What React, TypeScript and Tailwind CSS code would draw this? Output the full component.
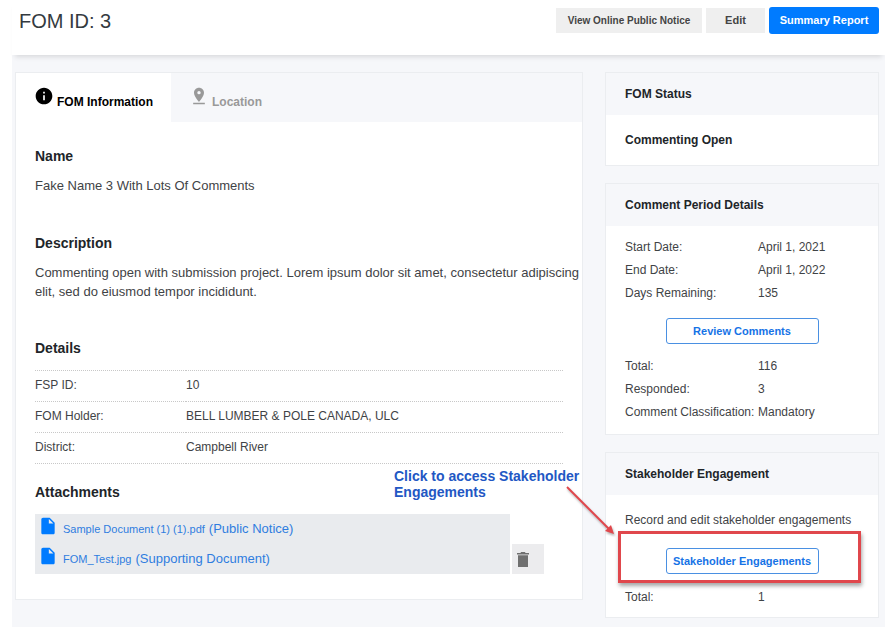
import type { ReactNode } from "react";
import { MdInfo, MdInsertDriveFile, MdPinDrop } from "react-icons/md";

const details = [
  ["FSP ID:", "10"],
  ["FOM Holder:", "BELL LUMBER & POLE CANADA, ULC"],
  ["District:", "Campbell River"],
];

function Heading({ children }: { children: ReactNode }) {
  return <h2 className="text-[14px] leading-5 font-bold text-[#212529]">{children}</h2>;
}

function Card({ title, children }: { title: string; children: ReactNode }) {
  return (
    <section className="border border-[#ebedf0] bg-white">
      <h2 className="bg-[#f6f7fa] px-[19px] py-3 text-[12px] leading-[18px] font-bold text-[#212529]">{title}</h2>
      {children}
    </section>
  );
}

function Facts({ rows }: { rows: string[][] }) {
  return (
    <dl className="grid grid-cols-[133px_1fr] leading-[23px]">
      {rows.map(([label, value]) => (
        <div key={label} className="contents">
          <dt className="whitespace-nowrap">{label}</dt>
          <dd>{value}</dd>
        </div>
      ))}
    </dl>
  );
}

function OutlineButton({ children }: { children: ReactNode }) {
  return (
    <button
      type="button"
      className="h-[26px] w-[153px] rounded-[3px] border border-[#4a90e2] bg-white text-[11px] font-bold text-[#1673e6]"
    >
      {children}
    </button>
  );
}

function Attachment({ name, kind }: { name: string; kind: string }) {
  return (
    <a href="#attachment" className="flex h-[30px] w-[475px] items-center bg-[#e9ebee] pl-[3px] text-[#2f7de0]">
      <MdInsertDriveFile className="mb-1.5 size-5 shrink-0 text-[#007bff]" />
      <span className="ml-[5px] text-[11px]">{name}</span>
      <span className="ml-1 text-[13px]">{kind}</span>
    </a>
  );
}

export default function App() {
  return (
    <div className="flex min-h-screen flex-col bg-white pl-3 font-['Liberation_Sans',Arial,sans-serif] text-[12px] text-[#3f4346]">
      <header className="z-10 flex h-[55px] items-start justify-between bg-white pt-[7px] pr-1.5 pl-[7px] shadow-[0_5px_5px_-3px_rgba(0,0,0,0.12)]">
        <h1 className="text-[20px] leading-7 text-[#343a40]">FOM ID: 3</h1>
        <div className="flex items-center gap-1 font-bold">
          <button type="button" className="h-[25px] w-[146px] bg-[#efefef] text-[10px] text-[#444444]">
            View Online Public Notice
          </button>
          <button type="button" className="h-[25px] w-[59px] bg-[#efefef] text-[11px] text-[#444444]">
            Edit
          </button>
          <button type="button" className="h-[27px] w-[110px] rounded-[3px] bg-[#007bff] text-[11px] text-white">
            Summary Report
          </button>
        </div>
      </header>

      <main className="flex flex-1 items-start gap-[22px] bg-[#f6f7fa] pt-[17px] pr-1.5 pb-2 pl-[3px]">
        <section className="relative min-w-0 flex-1 border border-[#ebedf0] bg-white">
          <div role="tablist" className="flex h-[49px] bg-[#f6f7fa] font-bold">
            <button
              type="button"
              role="tab"
              aria-selected="true"
              className="flex w-[155px] items-center gap-[3px] bg-white pl-[18px] text-black"
            >
              <MdInfo className="mb-1 size-5" />
              <span className="pt-2">FOM Information</span>
            </button>
            <button
              type="button"
              role="tab"
              aria-selected="false"
              className="flex items-center gap-[3px] pl-[18px] text-[#999999]"
            >
              <MdPinDrop className="mb-1 size-5" />
              <span className="pt-2">Location</span>
            </button>
          </div>

          <div className="px-[19px] pt-6 pb-[25px]">
            <Heading>Name</Heading>
            <p className="mt-[10px] text-[13px] leading-[19px]">Fake Name 3 With Lots Of Comments</p>

            <div className="mt-[38px]">
              <Heading>Description</Heading>
              <p className="mt-[10px] -mr-[19px] text-[13px] leading-[19px]">
                Commenting open with submission project. Lorem ipsum dolor sit amet, consectetur adipiscing elit, sed do
                eiusmod tempor incididunt.
              </p>
            </div>

            <div className="mt-[37px]">
              <Heading>Details</Heading>
              <table className="mt-3 w-full border-collapse text-left">
                <tbody>
                  {details.map(([label, value]) => (
                    <tr key={label} className="h-[31px] border-y border-dotted border-[#c8c8c8]">
                      <th className="w-[151px] pb-0.5 font-normal">{label}</th>
                      <td className="pb-0.5">{value}</td>
                    </tr>
                  ))}
                </tbody>
              </table>
            </div>

            <div className="mt-[18px]">
              <Heading>Attachments</Heading>
              <div className="mt-3">
                <Attachment name="Sample Document (1) (1).pdf" kind="(Public Notice)" />
                <div className="flex gap-0.5">
                  <Attachment name="FOM_Test.jpg" kind="(Supporting Document)" />
                  <button
                    type="button"
                    aria-label="Delete attachment"
                    className="flex h-[30px] w-8 items-center bg-[#ececee] pl-[5px] text-[#707070]"
                  >
                    <svg className="h-[15px] w-3" viewBox="0 0 12 15" fill="currentColor" aria-hidden="true">
                      <path d="M0 1H3.5L4 0H8L8.500 1H12V2.500H0ZM1 3.200H11V15H1Z" />
                    </svg>
                  </button>
                </div>
              </div>
            </div>
          </div>

          <p className="absolute right-0 bottom-[99px] w-[188px] text-[14px] leading-4 font-bold text-[#2257c4]">
            Click to access Stakeholder Engagements
          </p>
        </section>

        <aside className="flex w-[274px] shrink-0 flex-col gap-[17px]">
          <Card title="FOM Status">
            <p className="px-[19px] py-4 leading-[18px] font-bold text-[#212529]">Commenting Open</p>
          </Card>

          <Card title="Comment Period Details">
            <div className="px-[19px] py-[10px]">
              <Facts
                rows={[
                  ["Start Date:", "April 1, 2021"],
                  ["End Date:", "April 1, 2022"],
                  ["Days Remaining:", "135"],
                ]}
              />
              <div className="flex justify-center pt-[13px] pb-[11px]">
                <OutlineButton>Review Comments</OutlineButton>
              </div>
              <Facts
                rows={[
                  ["Total:", "116"],
                  ["Responded:", "3"],
                  ["Comment Classification:", "Mandatory"],
                ]}
              />
            </div>
          </Card>

          <Card title="Stakeholder Engagement">
            <div className="px-[19px] pt-[14px] pb-2">
              <p className="leading-[23px]">Record and edit stakeholder engagements</p>
              <div className="relative flex justify-center pt-4 pb-3">
                <OutlineButton>Stakeholder Engagements</OutlineButton>
                <div className="pointer-events-none absolute -top-px -right-0.5 -left-[7px] h-[52px] border-[3px] border-[#e0474c] shadow-[1px_3px_4px_rgba(0,0,0,0.35)]" />
                <svg
                  className="pointer-events-none absolute -top-[47px] -left-[61px] h-[52px] w-[52px] drop-shadow-[1px_2px_1px_rgba(0,0,0,0.3)]"
                  viewBox="0 0 52 52"
                  aria-hidden="true"
                >
                  <path d="M3 2 46 45" stroke="#e0474c" strokeWidth="2" />
                  <path d="M50 49 41 46 47 40Z" fill="#e0474c" />
                </svg>
              </div>
              <Facts rows={[["Total:", "1"]]} />
            </div>
          </Card>
        </aside>
      </main>
    </div>
  );
}
